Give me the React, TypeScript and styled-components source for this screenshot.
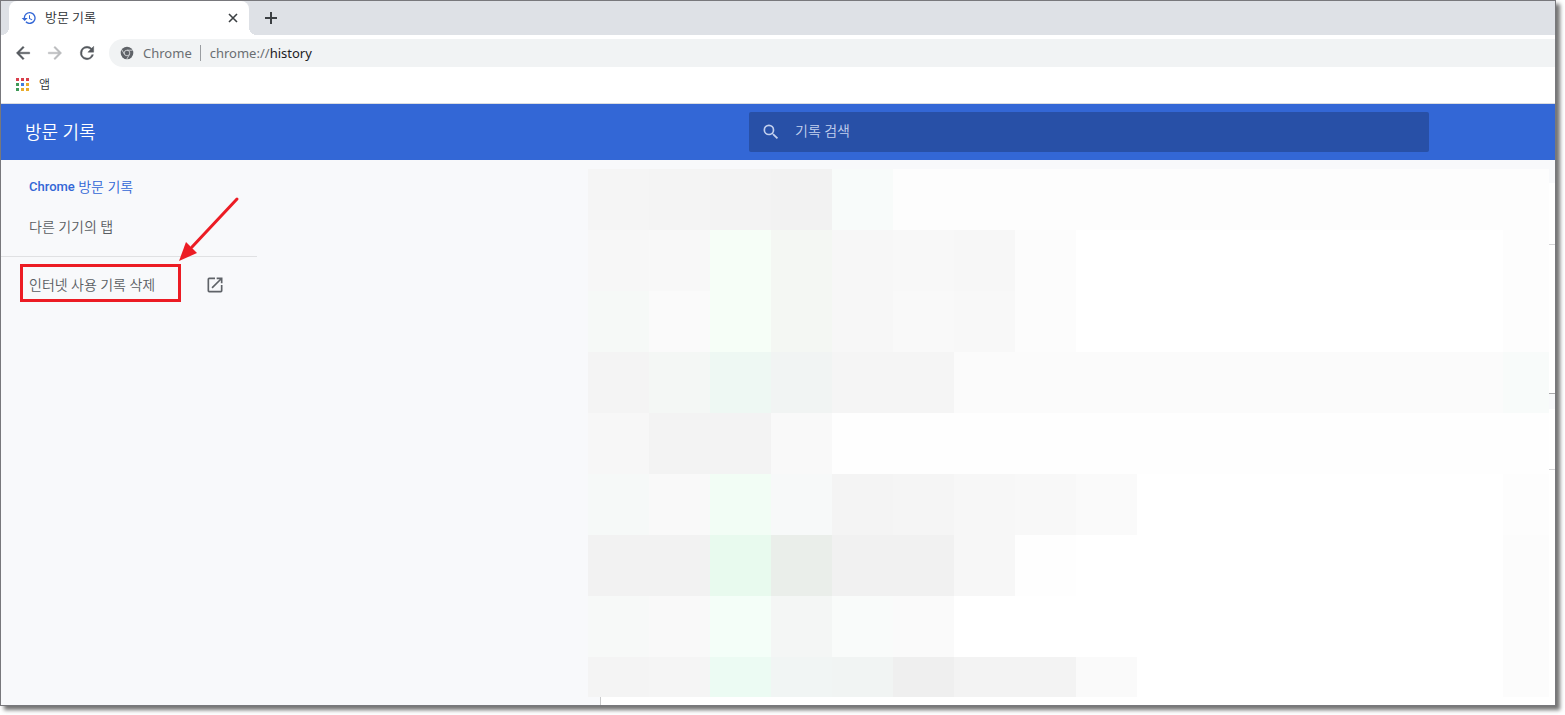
import React from "react";
import styled, { createGlobalStyle } from "styled-components";

const GlobalStyle = createGlobalStyle`
  * { box-sizing: border-box; }
  html, body, #root { height: 100%; }
  body { margin: 0; background: #fff; overflow: hidden; }
  button, input { font: inherit; color: inherit; border: 0; padding: 0; background: none; }
`;

const Page = styled.div`
  height: 100%;
  padding: 0 9px 9px 0;
  font-family: "Roboto", "Noto Sans CJK KR", sans-serif;
  font-size: 14px;
  line-height: 20px;
`;

const Window = styled.div`
  position: relative;
  height: 100%;
  display: flex;
  flex-direction: column;
  border: 1px solid #78787c;
  background: #fff;
  box-shadow: 4px 4px 4px rgba(0, 0, 0, 0.55);
`;

const TabStrip = styled.div`
  height: 34px;
  flex: none;
  display: flex;
  align-items: flex-end;
  padding-left: 8px;
  background: #dee1e6;
`;

const Tab = styled.div`
  position: relative;
  width: 240px;
  height: 34px;
  display: flex;
  align-items: center;
  padding: 0 8px 0 12px;
  border-radius: 8px 8px 0 0;
  background: #fff;
  color: #2e3134;
  font-size: 13px;
  font-weight: 350;

  &::before, &::after {
    content: "";
    position: absolute;
    bottom: 0;
    width: 8px;
    height: 8px;
  }
  &::before {
    right: 100%;
    background: radial-gradient(circle at 0 0, #dee1e6 8px, #fff 8px);
  }
  &::after {
    left: 100%;
    background: radial-gradient(circle at 100% 0, #dee1e6 8px, #fff 8px);
  }
`;

const TabTitle = styled.span`
  flex: 1;
  padding-left: 8px;
`;

const IconButton = styled.button<{ $size?: number }>`
  width: ${(p) => p.$size ?? 24}px;
  height: ${(p) => p.$size ?? 24}px;
  flex: none;
  display: grid;
  place-items: center;
`;

const NewTab = styled(IconButton)`
  margin: 0 0 5px 10px;
`;

const NavBar = styled.div`
  height: 36px;
  flex: none;
  display: flex;
  align-items: center;
  gap: 8px;
  padding-left: 10px;
`;

const Omnibox = styled.div`
  flex: 1;
  height: 28px;
  display: flex;
  align-items: center;
  margin-left: 2px;
  padding-left: 10px;
  border-radius: 14px 0 0 14px;
  background: #f1f3f4;
  color: #6a6e72;
  font-family: "Noto Sans", sans-serif;
  font-size: 13px;
`;

const SiteName = styled.span`
  margin-left: 8px;
  padding-right: 8px;
  line-height: 16px;
  border-right: 1px solid #9a9da1;
`;

const Url = styled.span`
  margin-left: 9px;
  b { font-weight: 400; color: #202124; }
`;

const BookmarkBar = styled.div`
  height: 33px;
  flex: none;
  display: flex;
  align-items: center;
  padding: 0 0 5px 15px;
  border-bottom: 1px solid #dadce0;
  color: #2e3134;
  font-size: 12px;
  font-weight: 350;
`;

const AppsButton = styled.button`
  display: flex;
  align-items: center;
  gap: 9px;
`;

const Toolbar = styled.header`
  height: 56px;
  flex: none;
  display: flex;
  align-items: center;
  justify-content: space-between;
  padding: 0 126px 0 24px;
  background: #3367d6;
  color: #fff;
`;

const Title = styled.h1`
  margin: 0;
  padding-top: 2px;
  font-size: 18px;
  font-weight: 350;
  line-height: 24px;
`;

const SearchBox = styled.label`
  width: 680px;
  height: 40px;
  display: flex;
  align-items: center;
  gap: 14px;
  padding-left: 12px;
  border-radius: 2px;
  background: #2850a7;
  color: #c3d0ee;
`;

const SearchInput = styled.input`
  flex: 1;
  padding-bottom: 2px;
  outline: 0;
  font-weight: 350;
  &::placeholder { color: #c3d0ee; opacity: 1; }
`;

const Body = styled.div`
  flex: 1;
  min-height: 0;
  display: flex;
  background: #f8f9fb;
`;

const Sidebar = styled.nav`
  width: 256px;
  flex: none;
  display: flex;
  flex-direction: column;
  padding-top: 7px;
`;

const MenuLink = styled.a<{ $active?: boolean }>`
  height: 40px;
  display: flex;
  align-items: center;
  padding-left: 28px;
  color: ${(p) => (p.$active ? "#3367d6" : "#5a5e63")};
  font-weight: 350;
  text-decoration: none;
  white-space: pre;
  b { font-size: 13px; font-weight: 500; }
`;

const Divider = styled.hr`
  width: 100%;
  height: 1px;
  margin: 9px 0 8px;
  border: 0;
  background: #e0e1e3;
`;

const ClearRow = styled(MenuLink)`
  position: relative;
  justify-content: space-between;
  padding-right: 32px;
`;

const Highlight = styled.div`
  position: absolute;
  top: -1px;
  left: 19px;
  width: 161px;
  height: 38px;
  border: 3px solid #ec1c24;
`;

const Arrow = styled.svg`
  position: absolute;
  left: 176px;
  top: -70px;
`;

const Results = styled.main`
  flex: 1;
  min-width: 0;
  display: flex;
  padding-left: 331px;
`;

const Mosaic = styled.div`
  flex: 1;
  min-width: 0;
  display: grid;
  grid-template-columns: repeat(15, 61px) 1fr;
  grid-template-rows: repeat(8, 61px) 40px;
  padding-top: 9px;
`;

const Tile = styled.div<{ $color: string; $span: number }>`
  grid-column: span ${(p) => p.$span};
  background: ${(p) => p.$color};
`;

const BottomEdge = styled.div`
  grid-column: 1 / -1;
  height: 8px;
  margin-left: 12px;
  border-left: 1px solid #c8c9ca;
  background: #fff;
`;

const CardEdge = styled.div`
  width: 6px;
  flex: none;
  padding-top: 23px;
`;

const EdgePiece = styled.div<{ $height: number; $gap?: boolean; $line?: string }>`
  height: ${(p) => p.$height}px;
  background: ${(p) => (p.$gap ? "transparent" : "#fff")};
  border-bottom: 1px solid ${(p) => p.$line ?? "transparent"};
`;

type Run = [color: string, span: number];

const rows: Run[][] = [
  [["#f5f5f5", 1], ["#f4f4f4", 1], ["#f3f3f3", 1], ["#f2f2f2", 1], ["#f8fbfa", 1], ["#fdfdfd", 11]],
  [["#f7f7f7", 1], ["#f8f8f8", 1], ["#f6fef7", 1], ["#f4f7f3", 1], ["#f7f7f7", 1], ["#f8f8f8", 1], ["#f7f7f7", 1], ["#fcfcfc", 1], ["#ffffff", 7], ["#fdfdfd", 1]],
  [["#f6f9f7", 1], ["#fafafa", 1], ["#f6fef7", 1], ["#f4f7f3", 1], ["#f7f7f7", 1], ["#f9f9f9", 1], ["#f8f8f8", 1], ["#fcfcfc", 1], ["#ffffff", 7], ["#fdfdfd", 1]],
  [["#f4f4f4", 1], ["#f4f7f5", 1], ["#eef8f3", 1], ["#f1f4f3", 1], ["#f5f5f5", 2], ["#fbfbfb", 9], ["#f8fbfa", 1]],
  [["#f7f7f7", 1], ["#f3f3f3", 2], ["#f9f9f9", 1], ["#fefefe", 12]],
  [["#f6f9f8", 1], ["#f9f9f9", 1], ["#f2fdf5", 1], ["#f7f9f9", 1], ["#f4f4f4", 1], ["#f5f5f5", 1], ["#f7f7f7", 1], ["#f8f8f8", 1], ["#fafafa", 1], ["#ffffff", 6], ["#fdfdfd", 1]],
  [["#f2f2f2", 1], ["#f2f2f2", 1], ["#e8faee", 1], ["#eaeeea", 1], ["#f1f1f1", 2], ["#f7f7f7", 1], ["#fefefe", 1], ["#ffffff", 7], ["#fcfcfc", 1]],
  [["#f7f9f8", 1], ["#f9f9f9", 1], ["#f4fef8", 1], ["#f4f6f5", 1], ["#f9fbfa", 1], ["#fafafa", 1], ["#ffffff", 9], ["#fcfcfc", 1]],
  [["#f4f4f4", 1], ["#f5f5f5", 1], ["#ecfbf3", 1], ["#f1f5f4", 1], ["#f1f4f3", 1], ["#efefef", 1], ["#f3f3f3", 2], ["#fafafa", 1], ["#ffffff", 6], ["#fcfcfc", 1]],
];

const appColors = ["#d93f4c", "#d93f4c", "#d93f4c", "#3f9a58", "#3f7de0", "#e9ac2c", "#3f9a58", "#e9ac2c", "#e9ac2c"];

const HistoryIcon = () => (
  <svg width="16" height="16" viewBox="0 0 24 24" fill="#3367d6">
    <path d="M13 3a9 9 0 0 0-9 9H1l4.5 4.5L10 12H6a7 7 0 1 1 2.06 4.94l-1.42 1.42A9 9 0 1 0 13 3zm-1 5v5l4.28 2.54.72-1.21-3.5-2.08V8z" />
  </svg>
);

const BackPath = "M20 11H7.83l5.59-5.59L12 4l-8 8 8 8 1.41-1.41L7.83 13H20z";
const ForwardPath = "M12 4l-1.41 1.41L16.17 11H4v2h12.17l-5.58 5.59L12 20l8-8z";
const ReloadPath =
  "M17.65 6.35A7.96 7.96 0 0 0 12 4a8 8 0 1 0 7.73 10h-2.08A6 6 0 1 1 12 6c1.66 0 3.14.69 4.22 1.78L13 11h7V4z";
const SearchPath =
  "M15.5 14h-.79l-.28-.27A6.47 6.47 0 0 0 16 9.5 6.5 6.5 0 1 0 9.5 16c1.61 0 3.09-.59 4.23-1.57l.27.28v.79l5 4.99L20.49 19zm-6 0a4.5 4.5 0 1 1 0-9 4.5 4.5 0 0 1 0 9z";
const OpenPath =
  "M19 19H5V5h7V3H5a2 2 0 0 0-2 2v14a2 2 0 0 0 2 2h14a2 2 0 0 0 2-2v-7h-2zM14 3v2h3.59l-9.83 9.83 1.41 1.41L19 6.41V10h2V3z";

const Glyph = ({ d, size, color, bold }: { d: string; size: number; color: string; bold?: boolean }) => (
  <svg width={size} height={size} viewBox="0 0 24 24" fill={color} stroke={bold ? color : "none"} strokeWidth={bold ? 0.5 : 0}>
    <path d={d} />
  </svg>
);

const ChromeIcon = () => (
  <svg width="16" height="16" viewBox="0 0 16 16">
    <circle cx="8" cy="8" r="6.3" fill="#5f6368" />
    <circle cx="8" cy="8" r="2.8" fill="none" stroke="#d4d6d8" strokeWidth="0.9" />
    <path d="M8 5.2h5.6M5.5 9.4L2.7 4.6M10.5 9.4L7.8 14.1" stroke="#d4d6d8" strokeWidth="0.9" fill="none" />
  </svg>
);

const AppsIcon = () => (
  <svg width="14" height="14" viewBox="0 0 14 14">
    {appColors.map((c, i) => (
      <rect key={i} x={(i % 3) * 5} y={Math.floor(i / 3) * 5} width="3" height="3" fill={c} />
    ))}
  </svg>
);

export default function App() {
  return (
    <Page>
      <GlobalStyle />
      <Window>
        <TabStrip>
          <Tab>
            <HistoryIcon />
            <TabTitle>방문 기록</TabTitle>
            <IconButton $size={16} aria-label="탭 닫기">
              <svg width="10" height="10" viewBox="0 0 10 10" stroke="#3c4043" strokeWidth="1.6">
                <path d="M1 1l8 8M9 1L1 9" />
              </svg>
            </IconButton>
          </Tab>
          <NewTab aria-label="새 탭">
            <svg width="12" height="12" viewBox="0 0 12 12" stroke="#3c4043" strokeWidth="2">
              <path d="M6 0v12M0 6h12" />
            </svg>
          </NewTab>
        </TabStrip>
        <NavBar>
          <IconButton aria-label="뒤로"><Glyph d={BackPath} size={20} color="#55595e" bold /></IconButton>
          <IconButton aria-label="앞으로"><Glyph d={ForwardPath} size={20} color="#babcbe" bold /></IconButton>
          <IconButton aria-label="새로고침"><Glyph d={ReloadPath} size={20} color="#55595e" bold /></IconButton>
          <Omnibox>
            <ChromeIcon />
            <SiteName>Chrome</SiteName>
            <Url>chrome://<b>history</b></Url>
          </Omnibox>
        </NavBar>
        <BookmarkBar>
          <AppsButton><AppsIcon />앱</AppsButton>
        </BookmarkBar>
        <Toolbar>
          <Title>방문 기록</Title>
          <SearchBox>
            <Glyph d={SearchPath} size={20} color="#c3d0ee" />
            <SearchInput type="search" placeholder="기록 검색" aria-label="기록 검색" />
          </SearchBox>
        </Toolbar>
        <Body>
          <Sidebar>
            <MenuLink href="#history" $active><b>Chrome</b> 방문 기록</MenuLink>
            <MenuLink href="#tabs">다른 기기의 탭</MenuLink>
            <Divider />
            <ClearRow href="#clear">
              인터넷 사용 기록 삭제
              <Glyph d={OpenPath} size={20} color="#5f6368" />
              <Highlight />
              <Arrow width="64" height="70" viewBox="0 0 64 70">
                <path d="M60 4L15 52" stroke="#ec1c24" strokeWidth="3" strokeLinecap="round" />
                <path d="M2 66L9 47L20 58Z" fill="#ec1c24" />
              </Arrow>
            </ClearRow>
          </Sidebar>
          <Results>
            <Mosaic>
              {rows.map((row, y) =>
                row.map(([color, span], x) => <Tile key={`${y}-${x}`} $color={color} $span={span} />)
              )}
              <BottomEdge />
            </Mosaic>
            <CardEdge>
              <EdgePiece $height={62} $line="#d5d5d7" />
              <EdgePiece $height={149} $line="#a9a9ab" />
              <EdgePiece $height={15} $gap />
              <EdgePiece $height={61} $line="#d5d5d7" />
              <EdgePiece $height={235} />
            </CardEdge>
          </Results>
        </Body>
      </Window>
    </Page>
  );
}
